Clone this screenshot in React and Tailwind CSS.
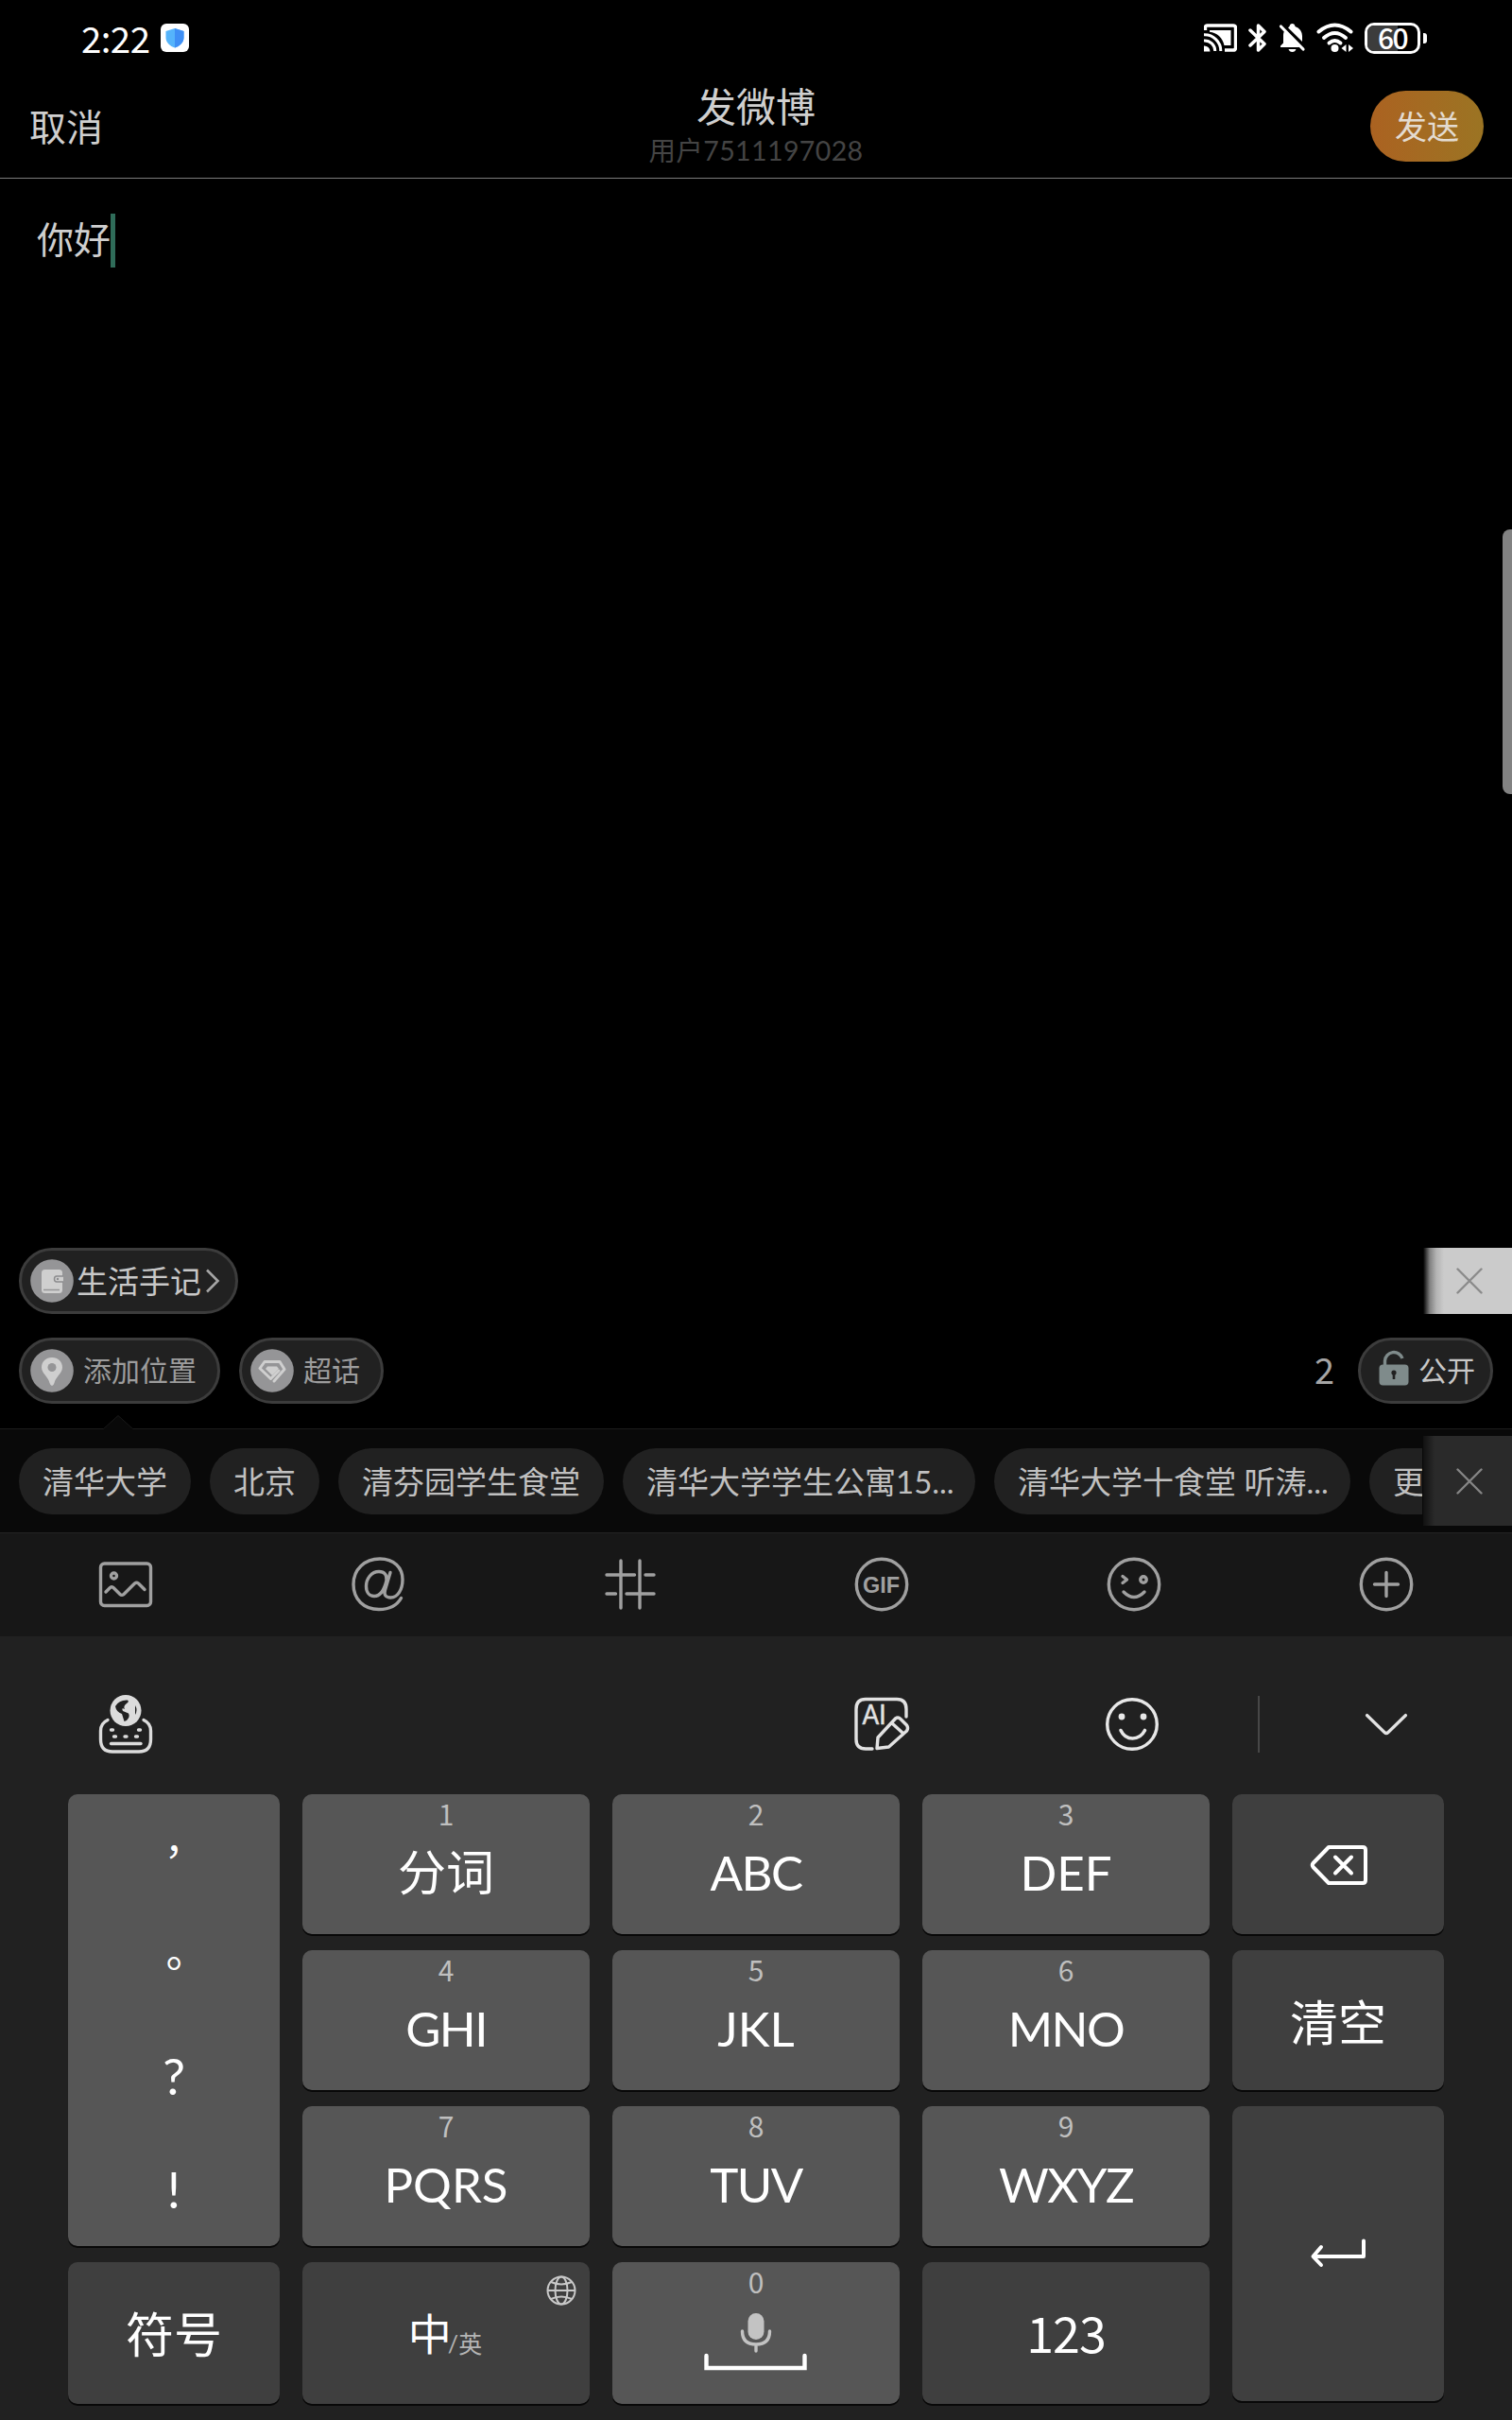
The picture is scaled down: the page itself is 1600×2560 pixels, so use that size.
import React from "react";

const FONT = "font-['Lato','Noto_Sans_CJK_SC',sans-serif]";

function StatusBar() {
  return (
    <div className="flex h-[80px] shrink-0 items-center justify-between pl-[86px] pr-[90px] text-white">
      <div className="flex items-center">
        <span className="mt-[-3px] w-[84px] text-[38.5px] leading-[40px] tracking-[-0.6px] font-['Noto_Sans_CJK_SC',sans-serif]">2:22</span>
        <span className="flex h-[30px] w-[30px] items-center justify-center rounded-[6px] bg-white">
          <svg width="22" height="22" viewBox="0 0 22 22">
            <path d="M11 1 L20.5 4 V11 C20.5 16 16 20 11 21.5 C6 20 1.5 16 1.5 11 V4 Z" fill="#55b4fb" />
            <path d="M11 1 L20.5 4 V11 C20.5 16 16 20 11 21.5 Z" fill="#3f8ff5" />
          </svg>
        </span>
      </div>
      <div className="flex items-center">
        <svg width="35" height="30" viewBox="0 0 35 30" fill="none" stroke="#fff" strokeWidth="3">
          <path d="M1.500 7 V4 Q1.500 2 3.500 2 H31 Q33.500 2 33.500 4.500 V25.500 Q33.500 28 31 28 H22" strokeWidth="3.400" />
          <path d="M6 7 H28.500 V23 H21.500 C20 15.500 14 9.500 6 8.800 Z" fill="#fff" stroke="none" />
          <path d="M0 11.800 A17 17 0 0 1 17.800 29" />
          <path d="M0 18 A11 11 0 0 1 11.800 29" />
          <path d="M0 23.500 A6 6 0 0 1 6.500 29.500 H0 Z" fill="#fff" stroke="none" />
        </svg>
        <svg className="ml-[12px]" width="20" height="32" viewBox="0 0 20 32" fill="none" stroke="#fff" strokeWidth="3.500" strokeLinejoin="round" strokeLinecap="round">
          <path d="M2 8 L17 22.500 L10.500 29 V3 L17 9.500 L2 24" />
        </svg>
        <svg className="ml-[12px]" width="30" height="32" viewBox="0 0 30 32">
          <path d="M11.500 4 Q12 1 14.500 1 Q17 1 17.500 4 Q24.500 6.500 25 14 V20 L10 5.200 Q11 4.300 11.500 4 Z" fill="#fff" />
          <path d="M6 9 L22.500 26 H2 V24.500 L5 21.500 V13 Q5 11 6 9 Z" fill="#fff" />
          <path d="M10.500 28 H18.500 Q17.500 31 14.500 31 Q11.500 31 10.500 28 Z" fill="#fff" />
          <path d="M2.500 4 L26 28" stroke="#fff" strokeWidth="3.200" strokeLinecap="round" />
        </svg>
        <svg className="ml-[10px]" width="40" height="32" viewBox="0 0 40 32" fill="none" stroke="#fff" strokeWidth="4" strokeLinecap="round">
          <path d="M2.500 9.500 Q19.500 -4.500 36.500 9.500" />
          <path d="M8 16 Q19.500 6 31 16" />
          <path d="M13.500 21.500 Q19.500 16.500 25.500 21.500" />
          <circle cx="19.500" cy="27" r="4" fill="#fff" stroke="none" />
          <path d="M31.500 23 V31 L26.500 27 Z M34 23 V31 L39 27 Z" fill="#fff" stroke="none" />
        </svg>
        <div className="ml-[11px] flex items-center gap-[3px]">
          <div className="relative flex h-[33px] w-[59px] items-center justify-center rounded-[10px] border-[3px] border-white">
            <span className="absolute inset-y-[0px] left-[0px] w-[32px] rounded-l-[7px] bg-[#3c3c3c]" />
            <span className="relative mt-[-3px] text-[30px] leading-[30px] tracking-[-1.5px] font-['Noto_Sans_CJK_SC',sans-serif] font-medium">60</span>
          </div>
          <span className="h-[11px] w-[4px] rounded-r-[3px] bg-white" />
        </div>
      </div>
    </div>
  );
}

function NavBar() {
  return (
    <div className="grid h-[109px] shrink-0 grid-cols-3 border-b border-[#7c7c7c] text-[#cfcfcf]">
      <div className="pl-[31px] pt-[34px] text-[39px] leading-[40px]">取消</div>
      <div className="flex flex-col items-center pt-[8px]">
        <div className="text-[42px] leading-[50px]">发微博</div>
        <div className="mt-[-1px] text-[28.5px] leading-[44px] tracking-[0.4px] text-[#444444]">用户7511197028</div>
      </div>
      <div className="flex justify-end pr-[30px] pt-[16px]">
        <div className="flex h-[75px] w-[120px] items-center justify-center rounded-full bg-linear-to-r from-[#ab6221] to-[#9b7423] text-[34px] leading-[40px] text-[#e3dbd0]">
          发送
        </div>
      </div>
    </div>
  );
}

function Close({ color }) {
  return (
    <svg width="28" height="28" viewBox="0 0 28 28" fill="none" stroke={color} strokeWidth="2.400" strokeLinecap="round">
      <path d="M1.500 1.500 L26.500 26.500 M26.500 1.500 L1.500 26.500" />
    </svg>
  );
}

function Badge({ children }) {
  return (
    <svg width="46" height="46" viewBox="0 0 46 46" fill="none">
      <circle cx="23" cy="23" r="22.800" fill="#959597" />
      {children}
    </svg>
  );
}

const PILL = "flex h-[70px] shrink-0 items-center rounded-full border-[3px] border-[#3c3c3c] bg-[#212121]";

function Options() {
  return (
    <div className="flex h-[191px] shrink-0 flex-col">
      <div className="flex h-[70px] items-center justify-between pl-[20px]">
        <div className={PILL + " w-[232px] pl-[9px] text-[33px] leading-[40px] text-[#c8c8c8]"}>
          <Badge>
            <rect x="12" y="11" width="22" height="25" rx="3.500" fill="#cfcfcf" />
            <path d="M14 32.500 H31" stroke="#959597" strokeWidth="1.500" />
            <path d="M35 18 H28 Q25.500 18 25.500 21 Q25.500 24 28 24 H35" fill="#cfcfcf" stroke="#8c8c8e" strokeWidth="1.500" />
            <circle cx="29" cy="21" r="1.200" fill="#8c8c8e" />
          </Badge>
          <span className="ml-[3px]">生活手记</span>
          <svg className="ml-[4px]" width="16" height="26" viewBox="0 0 16 26" fill="none" stroke="#a5a5a5" strokeWidth="2.600">
            <path d="M2 1.500 L13.500 13 L2 24.500" />
          </svg>
        </div>
        <div className="flex h-[70px] w-[94px] items-center bg-[linear-gradient(to_right,#000_0,#808080_7px,#b4b4b4_14px,#cbcbcb_22px)] pl-[35px]">
          <Close color="#8b8b8b" />
        </div>
      </div>
      <div className="mt-[25px] flex h-[70px] items-center pl-[20px] pr-[20px] text-[30px] leading-[40px] text-[#9c9c9c]">
        <div className={PILL + " w-[213px] pl-[9px]"}>
          <Badge>
            <path d="M23 9 C29.500 9 34 13.500 34 19.500 C34 26 27 29 25.500 36 Q24.500 39 23 39 Q21.500 39 20.500 36 C19 29 12 26 12 19.500 C12 13.500 16.500 9 23 9 Z" fill="#cfcfcf" />
            <circle cx="23" cy="19.500" r="4.500" fill="#959597" />
          </Badge>
          <span className="mb-[3px] ml-[10px]">添加位置</span>
        </div>
        <div className={PILL + " ml-[20px] w-[153px] pl-[9px]"}>
          <Badge>
            <path d="M25 34 L36 21.500 L31 13.500 H15 L10 20.500 L21.500 31.500 L30 23" stroke="#cfcfcf" strokeWidth="3" strokeLinejoin="round" strokeLinecap="round" />
            <path d="M18 18.500 H28 L30 21 L23 28 L16 21 Z" fill="#cfcfcf" />
          </Badge>
          <span className="mb-[3px] ml-[10px]">超话</span>
        </div>
        <span className="mb-[4px] ml-auto mr-[25px] text-[38px] leading-[44px] text-[#a5a5a5] font-['Noto_Sans_CJK_SC',sans-serif]">2</span>
        <div className={PILL + " w-[143px] pl-[19px] text-[#c8c8c8]"}>
          <svg className="mb-[7px]" width="32" height="38" viewBox="0 0 32 38" fill="none">
            <path d="M6.500 18 V11.500 A9.500 9.500 0 0 1 25 9" stroke="#7f8b8b" strokeWidth="3.400" />
            <rect x="0.500" y="15.500" width="31" height="22" rx="4" fill="#7f8b8b" />
            <circle cx="16" cy="24" r="2.600" fill="#212121" />
            <path d="M16 24 V31" stroke="#212121" strokeWidth="2.600" />
          </svg>
          <span className="mb-[3px] ml-[10px] text-[30px]">公开</span>
        </div>
      </div>
    </div>
  );
}

const PLACES = [
  ["清华大学", "w-[182px]"],
  ["北京", "w-[116px]"],
  ["清芬园学生食堂", "w-[281px]"],
  ["清华大学学生公寓15...", "w-[373px]"],
  ["清华大学十食堂 听涛...", "w-[377px]"],
  ["更多", "w-[118px]"],
];

function Places() {
  return (
    <div className="relative flex h-[110px] shrink-0 border-t border-[#1c1c1c] bg-[#090909]">
      <svg className="absolute left-[109px] top-[-15px]" width="32" height="16" viewBox="0 0 32 16">
        <path d="M0 15 L16 0.500 L32 15 V16 H0 Z" fill="#090909" />
        <path d="M0 15 L16 0.500 L32 15" fill="none" stroke="#191919" strokeWidth="1" />
      </svg>
      <div className="flex w-[1505px] gap-[20px] overflow-hidden pl-[20px] pt-[20px]">
        {PLACES.map(([name, width]) => (
          <div
            key={name}
            className={"flex h-[70px] shrink-0 items-center whitespace-nowrap rounded-full bg-[#212121] pl-[25px] text-[33px] leading-[40px] text-[#c0c0c0] " + width}
          >
            {name}
          </div>
        ))}
      </div>
      <div className="ml-[1px] mt-[7px] flex h-[95px] w-[94px] items-center bg-linear-to-r from-[#111111] to-[#2a2a2a] to-[12px] pl-[35px]">
        <Close color="#858585" />
      </div>
    </div>
  );
}

function Tool({ children, stroke = "#a0a0a0" }) {
  return (
    <div className="flex items-center justify-center pb-[2px]">
      <svg width="60" height="64" viewBox="0 0 60 64" fill="none" stroke={stroke} strokeWidth="3.400" strokeLinecap="round" strokeLinejoin="round">
        {children}
      </svg>
    </div>
  );
}

function Toolbar() {
  return (
    <div className="grid h-[110px] shrink-0 grid-cols-6 border-t border-[#242424] bg-[#171717]">
      <Tool>
        <rect x="3.500" y="10" width="53" height="44.500" rx="4" />
        <circle cx="17.500" cy="23" r="3" />
        <path d="M9 40 L13.500 35.500 Q15.500 34 17.500 36 L24 42.500 Q26 44.500 28.500 42 L39.500 31 Q41.500 29.500 43.500 31 L50 37.500" />
      </Tool>
      <Tool>
        <path d="M54.500 46.500 C50 54.500 41 58.500 31 58.500 C15 58.500 4 48 4 32 C4 16 16 5 32 5 C47 5 56 14.500 56 27 C56 38 50.500 46 43.500 46 C38 46 36 43 37.500 38 L43 19.500 M39 28 C39.500 22 37 18.500 31 18.500 C23 18.500 17.500 26 17.500 34 C17.500 40.500 21 44.500 26 44.500 C32.500 44.500 36.500 38.500 39 28" />
      </Tool>
      <Tool>
        <path d="M20 7 V57 M40 7 V57 M5 22 H34.500 M46 22 H55 M5 42 H14.500 M26 42 H55" />
      </Tool>
      <Tool>
        <circle cx="30" cy="32" r="26.700" />
        <text x="29.500" y="40.500" textAnchor="middle" fontFamily="Liberation Sans" fontWeight="bold" fontSize="24" textLength="39" lengthAdjust="spacingAndGlyphs" fill="#a0a0a0" stroke="none">GIF</text>
      </Tool>
      <Tool>
        <circle cx="30" cy="32" r="26.700" />
        <path d="M18 23.500 L22.500 27 L18 30.500 M19 40 Q30 51 41 40" />
        <circle cx="40" cy="27" r="3.200" />
      </Tool>
      <Tool>
        <circle cx="30" cy="32" r="26.700" />
        <path d="M30 19.500 V44.500 M17.500 32 H42.500" />
      </Tool>
    </div>
  );
}

function KeyboardTools() {
  return (
    <div className="grid h-[167px] shrink-0 grid-cols-6 pt-[20px]">
      <Tool stroke="#dcdcdc">
        <path d="M11 27.500 Q3.500 31 3.500 39 V48 Q3.500 61 16 61 H44 Q56.500 61 56.500 48 V39 Q56.500 31 49 27.500" />
        <circle cx="30" cy="17.500" r="16.500" fill="#dcdcdc" stroke="none" />
        <path d="M19 13 Q23 6 32 6.500 Q34 8 31 10 Q27 13 29 16 Q25 14 27 18 L33 20.500 Q35 24 31 28 L28.500 29 L26 21 Q20 19 19 13 Z M40 12 Q43 17 40 22 Z" fill="#212121" stroke="none" />
        <path d="M14.500 38 H16.500 M43.500 38 H45.500 M17.500 45 H19.500 M29 45 H31 M40.500 45 H42.500" />
        <path d="M14.500 52.500 H46" />
      </Tool>
      <div />
      <div />
      <Tool stroke="#e2e2e2">
        <path d="M56 24 V16 Q56 5.500 46 5.500 H13 Q3 5.500 3 16 V48 Q3 58 13 58 H20" />
        <text x="9.500" y="32" fontFamily="Lato" fontSize="29" textLength="25" lengthAdjust="spacingAndGlyphs" fill="#e2e2e2" stroke="#e2e2e2" strokeWidth="0.600">AI</text>
        <path d="M25 57.500 L26 46 L44.500 26 Q47.500 24 50 26.500 L56.500 33 Q58.500 36 56.500 39 L37.500 56 Z M41 31 L52 41" />
      </Tool>
      <Tool stroke="#e8e8e8">
        <circle cx="28" cy="32" r="26.300" />
        <path d="M16 38.500 Q20 47 28.500 47 Q37 47 41.500 38.500" strokeWidth="3.600" />
        <circle cx="17" cy="24" r="3.400" fill="#e8e8e8" stroke="none" />
        <circle cx="40" cy="24" r="3.400" fill="#e8e8e8" stroke="none" />
      </Tool>
      <div className="flex items-center pb-[2px]">
        <span className="ml-[-2px] h-[60px] w-[2px] bg-[#474747]" />
        <div className="flex flex-1 justify-center">
          <svg width="46" height="26" viewBox="0 0 46 26" fill="none" stroke="#e2e2e2" strokeWidth="3.200" strokeLinecap="round" strokeLinejoin="round">
            <path d="M2.500 3.500 L21 21.500 Q23 23.500 25 21.500 L43.500 3.500" />
          </svg>
        </div>
      </div>
    </div>
  );
}

const KEY = "flex flex-col items-center rounded-[10px] shadow-[0_2px_0_#080808]";
const LIGHT = " bg-[#565656]";
const DARK = " bg-[#3f3f3f]";

function Digit({ children }) {
  return <span className="mt-[2px] text-[30px] leading-[36px] text-[#bfbfbf] font-['Noto_Sans_CJK_SC',sans-serif]">{children}</span>;
}

function LetterKey({ digit, label, tight }) {
  return (
    <div className={KEY + LIGHT}>
      <Digit>{digit}</Digit>
      <span className={"mt-[15px] text-[51px] leading-[60px] " + (tight ? "tracking-[-1.6px]" : "")}>{label}</span>
    </div>
  );
}

function Keypad() {
  return (
    <div className="grid h-[662px] shrink-0 grid-cols-[224px_304px_304px_304px_224px] grid-rows-[148px_148px_148px_150px] gap-x-[24px] gap-y-[17px] pl-[72px] text-white">
      <div className={KEY + LIGHT + " row-span-3 text-[51px]"}>
        <span className="mt-[-3px] flex h-[121px] items-center text-[42px] font-['Noto_Sans_CJK_TC',sans-serif]">，</span>
        <span className="flex h-[121px] items-center text-[44px] font-['Noto_Sans_CJK_TC',sans-serif]">。</span>
        <span className="flex h-[121px] items-center text-[53px]">?</span>
        <span className="flex h-[121px] items-center text-[53px]">!</span>
      </div>
      <LetterKey digit="1" label="分词" />
      <LetterKey digit="2" label="ABC" tight />
      <LetterKey digit="3" label="DEF" />
      <div className={KEY + DARK + " justify-center pt-[2px]"}>
        <svg width="62" height="44" viewBox="0 0 62 44" fill="none" stroke="#fff" strokeWidth="4" strokeLinejoin="round" strokeLinecap="round">
          <path d="M21 3 H57 Q60 3 60 6 V38 Q60 41 57 41 H21 L4.500 24 Q3 22 4.500 20 Z M28 13.500 L45 30.500 M45 13.500 L28 30.500" />
        </svg>
      </div>
      <LetterKey digit="4" label="GHI" tight />
      <LetterKey digit="5" label="JKL" />
      <LetterKey digit="6" label="MNO" tight />
      <div className={KEY + DARK + " justify-center pt-[5px] text-[51px] leading-[60px]"}>清空</div>
      <LetterKey digit="7" label="PQRS" />
      <LetterKey digit="8" label="TUV" tight />
      <LetterKey digit="9" label="WXYZ" tight />
      <div className={KEY + DARK + " row-span-2 mb-[3px] justify-center"}>
        <svg width="60" height="32" viewBox="0 0 60 32" fill="none" stroke="#fff" strokeWidth="4" strokeLinejoin="round" strokeLinecap="round">
          <path d="M57 2.500 V19 H4 M12 9 L3.500 19 L12 28" />
        </svg>
      </div>
      <div className={KEY + DARK + " justify-center pt-[4px] text-[51px] leading-[60px]"}>符号</div>
      <div className={KEY + DARK + " relative justify-center pt-[8px]"}>
        <svg className="absolute right-[14px] top-[14px]" width="32" height="32" viewBox="0 0 32 32" fill="none" stroke="#c9c9c9" strokeWidth="2">
          <circle cx="16" cy="16" r="14.500" />
          <ellipse cx="16" cy="16" rx="6.500" ry="14.500" />
          <path d="M1.500 16 H30.500 M5 7 Q16 12 27 7 M5 25 Q16 20 27 25" />
        </svg>
        <div className="flex items-baseline leading-[60px]">
          <span className="text-[46px]">中</span>
          <span className="relative top-[3px] ml-[-4px] mr-[2px] text-[25px] text-[#b4b4b4]">/英</span>
        </div>
      </div>
      <div className={KEY + LIGHT}>
        <Digit>0</Digit>
        <svg className="mt-[15px]" width="110" height="64" viewBox="0 0 110 64" fill="none" strokeLinecap="round">
          <rect x="46.500" y="1" width="17" height="28" rx="8.500" fill="#c3c3c3" />
          <path d="M40.500 20 Q40.500 34 55 34 Q69.500 34 69.500 20 M55 34 V41" stroke="#c3c3c3" strokeWidth="3.400" />
          <path d="M2.500 46 V59 H106.500 V46" stroke="#fff" strokeWidth="4.400" />
        </svg>
      </div>
      <div className={KEY + DARK + " justify-center text-[52px] leading-[60px] tracking-[-1px] pb-[2px] font-['Noto_Sans_CJK_SC',sans-serif]"}>123</div>
    </div>
  );
}

export default function App() {
  return (
    <div className={"flex h-[2560px] w-[1600px] flex-col overflow-hidden bg-black " + FONT}>
      <StatusBar />
      <NavBar />
      <div className="relative min-h-0 flex-1">
        <div className="flex items-center pl-[39px] pt-[37px] text-[39px] leading-[57px] text-[#cfcfcf]">
          <span className="mt-[-3px]">你好</span>
          <span className="h-[57px] w-[5px] bg-[#2f6c59]" />
        </div>
        <span className="absolute right-0 top-[371px] h-[280px] w-[10px] rounded-l-[8px] bg-[#828282]" />
      </div>
      <Options />
      <Places />
      <div className="flex h-[939px] shrink-0 flex-col bg-[#212121]">
        <Toolbar />
        <KeyboardTools />
        <Keypad />
      </div>
    </div>
  );
}
